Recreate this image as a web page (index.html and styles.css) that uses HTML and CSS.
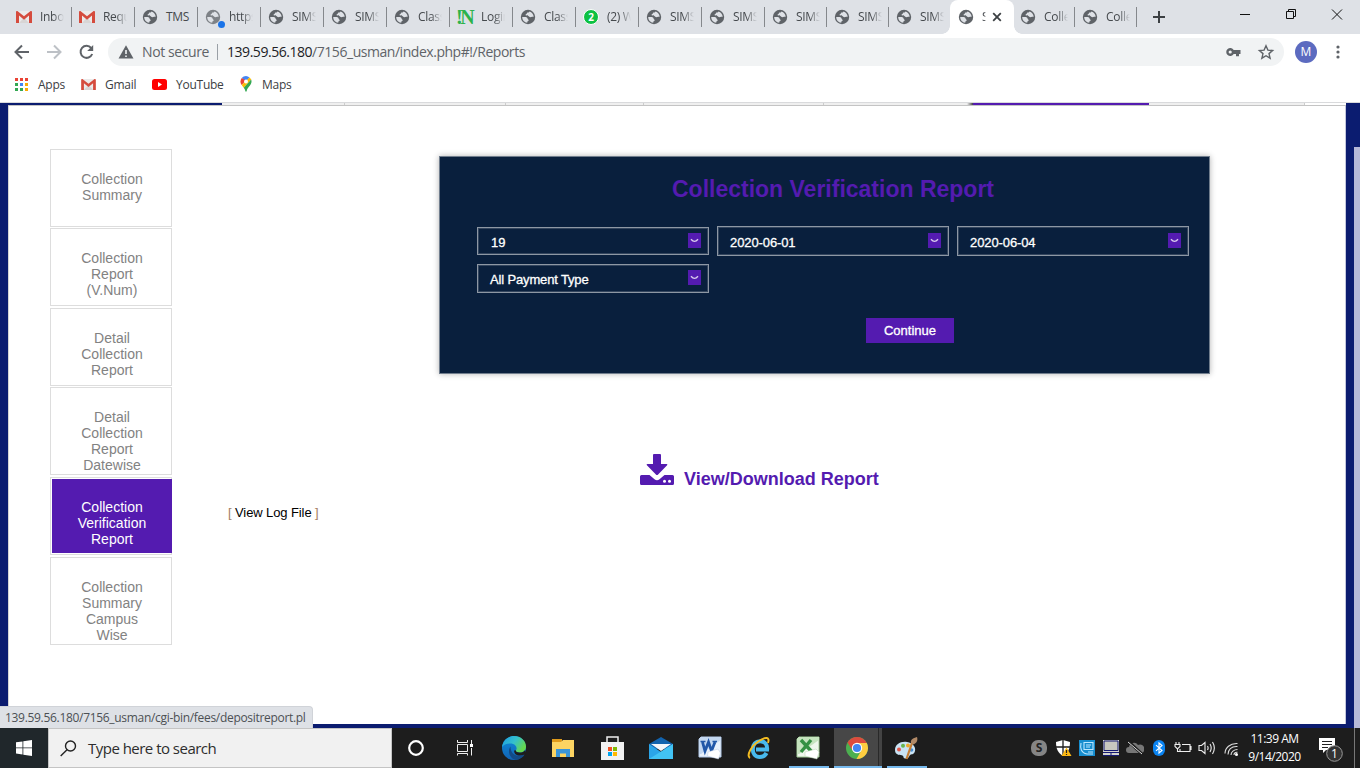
FILE: index.html
```html
<!DOCTYPE html>
<html lang="en">
<head>
<meta charset="utf-8">
<title>Reports</title>
<link rel="stylesheet" href="styles.css">
</head>
<body>
<svg class="defs" width="0" height="0">
  <symbol id="globe" viewBox="0 0 16 16"><circle cx="8" cy="8" r="7.2" fill="#5f6368"/><path d="M2.200 8c1.800 0 3.800-.2 4.800.6.800.7.300 1.600 1.200 1.900 1 .4.300 1.500-.4 1.700-.6.200-.5.900-.5 1.500C4.300 13.500 2.200 11 2.200 8zM9.500 2.400c-.4 1.100-1.200 1-2 1.200-.8.300-.4 1.300-1.200 1.500-.6.200-.9.600-.6 1.200.5.800 2.300.2 3 .9.700.8 1.700 1.200 2.600.9.800-.3 1.400-.5 2.400-.3-.2-2.600-1.800-4.700-4.200-5.400z" fill="#dee1e6"/></symbol>
  <symbol id="gmail" viewBox="0 0 16 12"><path d="M1 0h14v12H1z" fill="#eceaea"/><path d="M3 12 8 6.500 13 12z" fill="#d8d5d5"/><path d="M0 1v11h3V4.600L8 8.700l5-4.100V12h3V1c0-.8-1-1.300-1.700-.8L8 5.300 1.700.2C1-.3 0 .2 0 1z" fill="#d54b3d"/></symbol>
  <symbol id="chev" viewBox="0 0 13 15"><path d="M0 0h13v15H0z" fill="#541bb0"/><path d="M3 6.200q1.800 2.200 3.500 2.200T10 6.200" fill="none" stroke="#d9ccec" stroke-width="1.400"/></symbol>
</svg>

<header class="browser">
  <div class="tabs">
    <div class="tab"><svg class="fav mail"><use href="#gmail"/></svg><span>Inbox</span></div>
    <div class="tab"><svg class="fav mail"><use href="#gmail"/></svg><span>Reque</span></div>
    <div class="tab"><svg class="fav"><use href="#globe"/></svg><span class="full">TMS</span></div>
    <div class="tab loading"><svg class="fav"><use href="#globe"/></svg><i class="dot"></i><span>https</span></div>
    <div class="tab"><svg class="fav"><use href="#globe"/></svg><span>SIMS</span></div>
    <div class="tab"><svg class="fav"><use href="#globe"/></svg><span>SIMS</span></div>
    <div class="tab"><svg class="fav"><use href="#globe"/></svg><span>Class</span></div>
    <div class="tab"><b class="notes">!N</b><span>Login</span></div>
    <div class="tab"><svg class="fav"><use href="#globe"/></svg><span>Class</span></div>
    <div class="tab"><b class="chat">2</b><span>(2) W</span></div>
    <div class="tab"><svg class="fav"><use href="#globe"/></svg><span>SIMS</span></div>
    <div class="tab"><svg class="fav"><use href="#globe"/></svg><span>SIMS</span></div>
    <div class="tab narrow"><svg class="fav"><use href="#globe"/></svg><span>SIMS</span></div>
    <div class="tab narrow"><svg class="fav"><use href="#globe"/></svg><span>SIMS</span></div>
    <div class="tab narrow last"><svg class="fav"><use href="#globe"/></svg><span>SIMS</span></div>
    <div class="tab narrow active"><svg class="fav"><use href="#globe"/></svg><span>SIMS</span><svg class="close" viewBox="0 0 10 10"><path d="M1.200 1.200l7.600 7.600M8.800 1.200L1.200 8.800" stroke="#3c4043" stroke-width="1.800"/></svg></div>
    <div class="tab narrow"><svg class="fav"><use href="#globe"/></svg><span>Collec</span></div>
    <div class="tab narrow"><svg class="fav"><use href="#globe"/></svg><span>Collec</span></div>
    <svg class="plus" viewBox="0 0 12 12"><path d="M6 0v12M0 6h12" stroke="#3c4043" stroke-width="2"/></svg>
    <svg class="winctl" viewBox="0 0 120 20" fill="none" stroke="#111" stroke-width="1"><path d="M10 9.500h10M56.500 6.500h7v7h-7zM58.500 6.500v-2h7v7h-2M102 4.500l10 10M112 4.500l-10 10"/></svg>
  </div>

  <div class="toolbar">
    <svg class="nav" viewBox="0 0 96 20" fill="none" stroke-width="2"><path d="M17 10H4M10 3.500L3.500 10l6.500 6.500" stroke="#5f6368"/><path d="M35 10h13M42 3.500l6.500 6.500-6.500 6.500" stroke="#bdc1c6"/><path d="M79.200 6A6 6 0 1 0 80.200 12" stroke="#5f6368"/><path d="M81.200 3v6h-6z" fill="#5f6368"/></svg>
    <div class="address">
      <svg class="warn" viewBox="0 0 16 14"><path d="M8 .3L15.500 13.500H.5z" fill="#5f6368"/><path d="M8 5v4M8 10.500v1.500" stroke="#f1f3f4" stroke-width="1.600"/></svg>
      <span class="secure">Not secure</span>
      <span class="url"><em>139.59.56.180</em>/7156_usman/index.php#!/Reports</span>
      <svg class="addricons" viewBox="0 0 50 16"><path d="M7.700 6a4 4 0 1 0 0 4H10v2.200h3V10h1.500V6zM4.200 6.400a1.600 1.600 0 1 1 0 3.200 1.600 1.600 0 0 1 0-3.200z" fill="#5f6368" fill-rule="evenodd"/><path d="M40 1.800l1.900 4.300 4.700.4-3.600 3.100 1.100 4.600-4.100-2.500-4.100 2.500 1.100-4.600-3.600-3.100 4.700-.4z" fill="none" stroke="#5f6368" stroke-width="1.400"/></svg>
    </div>
    <b class="avatar">M</b>
    <svg class="dots" viewBox="0 0 4 14" fill="#5f6368"><circle cx="2" cy="2" r="1.600"/><circle cx="2" cy="7" r="1.600"/><circle cx="2" cy="12" r="1.600"/></svg>
  </div>

  <nav class="bookmarks">
    <a class="bm apps"><svg viewBox="0 0 13 13"><path d="M0 0h3v3H0zM5 0h3v3H5zM10 0h3v3h-3z" fill="#ea4335"/><path d="M0 5h3v3H0zM0 10h3v3H0zM5 10h3v3H5z" fill="#34a853"/><path d="M5 5h3v3H5z" fill="#4285f4"/><path d="M10 5h3v3h-3zM10 10h3v3h-3z" fill="#fbab05"/></svg>Apps</a>
    <a class="bm gm"><svg><use href="#gmail"/></svg>Gmail</a>
    <a class="bm yt"><svg viewBox="0 0 15 11"><rect width="15" height="11" rx="2.500" fill="#f00"/><path d="M6 3v5l4-2.500z" fill="#fff"/></svg>YouTube</a>
    <a class="bm mp"><svg viewBox="0 0 12 16"><path d="M6 0a5.600 5.600 0 0 0-4.300 2L6 5.600 9.500 1.400A5.500 5.500 0 0 0 6 0z" fill="#4285f4"/><path d="M1.700 2C-.2 4.500.4 7.200 1.700 9L6 4.500z" fill="#ea4335"/><path d="M9.500 1.400L1.700 9l2 2.700 7.500-8c-.4-1-.9-1.700-1.700-2.300z" fill="#fbbc04"/><path d="M11.200 3.600C12 6 11.300 7.800 9.800 9.700 8.300 11.500 7 12.500 6.700 15c-.2 1-1.200 1-1.400 0-.2-1.400-.8-2.300-1.600-3.300z" fill="#34a853"/><circle cx="6" cy="5.500" r="2" fill="#fff"/></svg>Maps</a>
  </nav>
</header>

<main class="viewport">
  <div class="strip"><i class="s1"></i><i class="s2"></i><i class="s3"></i><i class="s4"></i><i class="s5"></i><i class="s6"></i><i class="s7"></i><i class="s8"></i><i class="s9"></i></div>
  <div class="page">
    <aside class="menu">
      <a class="item">Collection Summary</a>
      <a class="item g1">Collection Report (V.Num)</a>
      <a class="item g2">Detail Collection Report</a>
      <a class="item g1 tall">Detail Collection Report Datewise</a>
      <a class="item g2 on"><span>Collection Verification Report</span></a>
      <a class="item g2 tall">Collection Summary Campus Wise</a>
    </aside>
    <section class="content">
      <form class="panel">
        <h1>Collection Verification Report</h1>
        <div class="fields">
          <div class="select first">19<svg><use href="#chev"/></svg></div>
          <div class="select">2020-06-01<svg><use href="#chev"/></svg></div>
          <div class="select">2020-06-04<svg><use href="#chev"/></svg></div>
          <div class="select pay">All Payment Type<svg><use href="#chev"/></svg></div>
        </div>
        <div class="go">Continue</div>
      </form>
      <a class="download"><svg viewBox="0 0 34 32" fill="#541bb0"><path d="M13 1q0-1 1-1h6q1 0 1 1v9h5.500q1.500 0 .6 1.200l-9 9.300q-1.100 1-2.200 0l-9-9.300Q6 10 7.500 10H13z"/><path d="M1.500 21h8l5 4.300q2.500 2 5 0l5-4.300h8q1.500 0 1.500 1.500v7q0 1.500-1.500 1.500h-31Q0 31 0 29.500v-7Q0 21 1.500 21z"/><circle cx="24.500" cy="27.300" r="1.500" fill="#fff"/><circle cx="29.500" cy="27.300" r="1.500" fill="#fff"/></svg><span>View/Download Report</span></a>
      <div class="log">[ <a>View Log File</a> ]</div>
    </section>
  </div>
  <i class="scroll"></i>
  <div class="status"><span>139.59.56.180/7156_usman/cgi-bin/fees/depositreport.pl</span></div>
</main>

<footer class="taskbar">
  <div class="start"><svg viewBox="0 0 16 16" fill="#fff"><path d="M0 2.300l6.500-.9v6.100H0zM7.300 1.300L16 0v7.500H7.300zM0 8.300h6.500v6.200L0 13.600zM7.300 8.300H16V16l-8.700-1.300z"/></svg></div>
  <div class="search"><svg viewBox="0 0 17 17" fill="none" stroke="#222" stroke-width="1.400"><circle cx="10.500" cy="6" r="5"/><path d="M7 9.700L.7 16"/></svg><span>Type here to search</span></div>
  <div class="apps-row">
    <div class="app"><svg viewBox="0 0 24 24"><circle cx="12" cy="12" r="6.800" fill="none" stroke="#fff" stroke-width="2.200"/></svg></div>
    <div class="app"><svg viewBox="0 0 24 24" fill="none" stroke="#eee" stroke-width="1"><path d="M4.500 4v2.500h10V4M4.500 8.500h10v7h-10zM4.500 19.500v-2h10v2M18.500 4v5M18.500 12v7.500"/><path d="M17 8h3v3h-3z" fill="#fff" stroke="none"/></svg></div>
    <div class="app"><svg viewBox="0 0 24 24"><defs><linearGradient id="e1" x2="1" y2=".5"><stop stop-color="#1a9be5"/><stop offset=".55" stop-color="#35c1cc"/><stop offset="1" stop-color="#65d84e"/></linearGradient><linearGradient id="e2" x2="0" y2="1"><stop stop-color="#0d8ddd"/><stop offset="1" stop-color="#1262b2"/></linearGradient></defs><circle cx="12" cy="12" r="12" fill="url(#e2)"/><path d="M0 11C1 4.500 6 0 12 0c7 0 12 5 12 10.500 0 4-3 6-6.500 6-2.500 0-4.200-1-3.500-2.200 2-3-1-6.800-5.500-6.800C4.500 7.500 1.200 9 0 11z" fill="url(#e1)"/><path d="M8.500 10.500C4.500 16 9 23.500 14 23.800c4-.4 7-2.600 8.700-5.400-7 3.400-14.200.6-14.200-7.900z" fill="#134a86"/><path d="M13.900 14.300c-.7 1.200 1 2.200 3.600 2.200 2.500 0 4.500-.8 5.600-2.600l.9 3-1.300 1.500c-5.700 2.600-11 .500-10.500-3.900z" fill="#1d1d1d"/></svg></div>
    <div class="app"><svg viewBox="0 0 24 24"><path d="M1 3h10v4H1z" fill="#e09b1b"/><path d="M1 6h9l2-2h11v17H1z" fill="#fcd462"/><path d="M5 21v-8h14v8h-4v-3.500H9V21z" fill="#3a95d8"/></svg></div>
    <div class="app"><svg viewBox="0 0 24 24"><path d="M7 7V1h11v6" fill="none" stroke="#eee" stroke-width="1.500"/><path d="M1 6h23v18H1z" fill="#f2f2f2"/><path d="M8 11h4v4H8z" fill="#f25022"/><path d="M13 11h4v4h-4z" fill="#7fba00"/><path d="M8 16h4v4H8z" fill="#00a4ef"/><path d="M13 16h4v4h-4z" fill="#ffb900"/></svg></div>
    <div class="app"><svg viewBox="0 0 24 24"><path d="M0 8l12-7 12 7v5H0z" fill="#1263ae"/><path d="M0 8l12 8 12-8v15H0z" fill="#2ba5e8"/><path d="M0 23l24-15v15z" fill="#42c3f4"/><path d="M2 8h20l-10 7z" fill="#f3f6fa"/></svg></div>
    <div class="app"><svg viewBox="0 0 24 24"><path d="M3 1h20v20H1V3z" fill="#e9f1fb" stroke="#b2c9e9"/><path d="M1 3l2-2h20v3L3 18H1z" fill="#c4d8f1"/><path d="M4.500 6l2.500 9 3.500-9 3 9L17 6" fill="none" stroke="#2157a8" stroke-width="2.800"/><path d="M2.500 5.500h5M14.500 5.500h4.500" stroke="#2157a8" stroke-width="1.600"/><path d="M10 16l10-3 2.500 4-2 6-11-3z" fill="#fff" stroke="#bccce3" stroke-width=".5"/></svg></div>
    <div class="app"><svg viewBox="0 0 24 24"><path d="M19.500 17c-1.500 3-4 4-6.700 4-4.700 0-7-3.600-7-7.800 0-4.700 3-8 7.300-8 4.800 0 7.400 3.300 7 8.300H9" fill="none" stroke="#48b9ed" stroke-width="4"/><path d="M3 22C-1 20 4 10 12 5c7-4.500 11-4 9 2" fill="none" stroke="#f4bc21" stroke-width="2"/></svg></div>
    <div class="app open"><svg viewBox="0 0 24 24"><path d="M3 1h20v20H1V3z" fill="#eef6ec" stroke="#9fca94"/><path d="M1 3l2-2h20v3L3 18H1z" fill="#c5e3be"/><path d="M5 4l11 12M15 4L5 16" stroke="#349142" stroke-width="3.400"/><path d="M9 16l11-3 3 3-2 7-12-3z" fill="#fff" stroke="#b9d2b2" stroke-width=".5"/></svg></div>
    <div class="app current"><svg viewBox="0 0 24 24"><circle cx="12" cy="12" r="11" fill="#4caf50"/><path d="M12 12L2.500 6.500A11 11 0 0 1 21.500 6.500z" fill="#dd4b3e"/><path d="M12 7h9.800A11 11 0 0 1 11.500 23l4.800-8.500z" fill="#ffcd40"/><path d="M2.500 6.500l5 8L12 7h9.800l-.3-.5z" fill="#dd4b3e"/><circle cx="12" cy="12" r="5.200" fill="#fff"/><circle cx="12" cy="12" r="4.100" fill="#4285f4"/></svg></div>
    <div class="app open"><svg viewBox="0 0 24 24"><path d="M1 14C1 8 7 5 13 6s9 5 8 9-4 3-5 4-1 4-5 3.500c-2-.3-1-2-2.500-3S1 20 1 14z" fill="#c9e3f4"/><circle cx="5" cy="13.500" r="2" fill="#e1574a"/><circle cx="9" cy="9.700" r="2" fill="#66b64e"/><circle cx="14" cy="9.500" r="2" fill="#efa929"/><circle cx="17.500" cy="14" r="1.800" fill="#488ed2"/><path d="M12.500 23L18 7" stroke="#c67f36" stroke-width="2.200"/><path d="M17 7c-1-3 2-5 6-6 1 3 0 6-3.500 7.500z" fill="#b28a67"/></svg></div>
  </div>
  <div class="tray">
    <svg viewBox="0 0 18 18"><rect x="1" y="1" width="16" height="16" rx="7" fill="#858585"/><text x="9" y="13.300" text-anchor="middle" class="sk">S</text></svg>
    <svg viewBox="0 0 18 18"><path d="M9 1l7 2c0 7-2 11-7 14C4 14 2 10 2 3z" fill="#fff"/><path d="M9 1v15M2 8h14" stroke="#1d1d1d" stroke-width="1.300"/><path d="M12.500 8.500L17.500 17h-10z" fill="#fdb913"/><path d="M12.500 11v3M12.500 15v1" stroke="#222" stroke-width="1.200"/></svg>
    <svg viewBox="0 0 18 18"><path d="M1 1h16v16H1z" fill="#178dce"/><path d="M3 4c-1 5 0 10 6 11h6M6 3.500h9v7H6zM8 6h5M8 8h4M10 13h5" fill="none" stroke="#bde8ff" stroke-width="1.100"/></svg>
    <svg viewBox="0 0 18 18"><path d="M1 1h16v16H1z" fill="#d3d3cd"/><path d="M2 2h14v9.500H2z" fill="#c8c7c0" stroke="#151973" stroke-width="1"/><path d="M1 13.500h16M9 13v4M1 16.500h16" stroke="#151973"/></svg>
    <svg viewBox="0 0 18 18"><path d="M3 14a3 3 0 0 1 0-6 5 5 0 0 1 9-2 4 4 0 0 1 4 8z" fill="#777"/><path d="M2 2l14 13" stroke="#1d1d1d" stroke-width="3"/><path d="M2 3l14 12" stroke="#ddd" stroke-width="1"/></svg>
    <svg viewBox="0 0 18 18"><rect x="3" y="1" width="12" height="16" rx="6" fill="#0a84f2"/><path d="M6 6.200l6 5.300-3 2.500V4l3 2.500-6 5.300" fill="none" stroke="#fff" stroke-width="1.100"/></svg>
    <svg viewBox="0 0 18 18" fill="none" stroke="#eee" stroke-width="1.100"><path d="M8 5.500h8v7H6V10M16 7.500h1v3h-1M2 3v2M5 3v2M1 5.500h5v2l-2 2H3l-2-2zM3.500 9.500v3H6"/></svg>
    <svg viewBox="0 0 18 18" fill="none" stroke="#eee" stroke-width="1.100"><path d="M1 6.500h2.500L7 3.500v11l-3.500-3H1zM9.500 7q1.200 2 0 4M12 5q2.400 4 0 8M14.500 3q3.700 6 0 12"/></svg>
    <svg viewBox="0 0 18 18" fill="none" stroke="#ddd" stroke-width="1.100"><path d="M3 14.500C3 9 8 4 15.500 4.500M6 15.500C6 11 9 7 15.500 7.500M9 16c0-3 3-5.500 6.500-5.500M12 16c0-1.500 1-3 3.500-2.700"/><circle cx="14.500" cy="15.500" r="1.500" fill="#fff" stroke="none"/></svg>
  </div>
  <div class="clock"><span>11:39 AM</span><span>9/14/2020</span></div>
  <div class="notify"><svg viewBox="0 0 26 26"><path d="M1 1h16v12h-9l-3 3v-3H1z" fill="#fff"/><path d="M4 4.500h10M4 7.500h10M4 10.500h6" stroke="#222" stroke-width="1"/><circle cx="16.500" cy="16.500" r="7.800" fill="#333" stroke="#999"/><text x="16.500" y="20.700" text-anchor="middle" class="badge">1</text></svg></div>
</footer>
</body>
</html>
```
FILE: styles.css
```css
* { box-sizing: border-box; }
body { margin: 0; width: 1360px; height: 768px; overflow: hidden; display: flex; flex-direction: column; background: #fff; font-family: "Liberation Sans", Arial, sans-serif; }
.defs { display: none; }
svg { display: block; flex: none; }

.browser, .status, .taskbar { font-family: "Open Sans", "Noto Sans", sans-serif; }
.browser { height: 103px; border-bottom: 1px solid #d9dadc; flex: none; }
.tabs { height: 34px; background: #dee1e6; display: flex; align-items: center; padding-left: 9px; }
.tab { position: relative; width: 63px; height: 20px; border-right: 1px solid #85888c; display: flex; align-items: center; padding-left: 7px; flex: none; }
.tab span { margin-left: 8px; width: 24px; overflow: hidden; white-space: nowrap; font-size: 12px; line-height: 18px; letter-spacing: -.3px; color: #45494d; -webkit-mask-image: linear-gradient(90deg, #000 55%, transparent); mask-image: linear-gradient(90deg, #000 55%, transparent); }
.tab .full { overflow: visible; -webkit-mask-image: none; mask-image: none; }
.narrow { width: 62px; }
.fav { width: 16px; height: 16px; }
.fav.mail { height: 12px; }
.last { border-right-color: transparent; }
.loading .fav { opacity: .75; }
.dot { position: absolute; left: 20px; top: 14px; width: 7px; height: 7px; border-radius: 50%; background: #1a73e8; }
.notes { width: 18px; margin: 0 -1px 0 -1px; font: bold 20px/20px "Liberation Serif", serif; letter-spacing: -2.500px; color: #2db34a; }
.chat { width: 16px; height: 16px; border-radius: 50%; border: 1px solid #fff; background: #0dc143; color: #fff; font-size: 10px; line-height: 14px; text-align: center; }
.active { height: 34px; width: 64px; margin: 0 -1px 0 -1px; padding-left: 8px; background: #fff; border: 0; border-radius: 8px 8px 0 0; }
.active::before, .active::after { content: ""; position: absolute; bottom: 0; width: 8px; height: 8px; }
.active::before { left: -8px; background: radial-gradient(circle at 0 0, #dee1e6 7.500px, #fff 8px); }
.active::after { right: -8px; background: radial-gradient(circle at 100% 0, #dee1e6 7.500px, #fff 8px); }
.active span { width: 4px; }
.close { width: 10px; height: 10px; margin-left: 6px; }
.plus { width: 12px; height: 12px; margin-left: 16px; }
.winctl { width: 120px; height: 20px; margin: -5px 0 0 65px; }

.toolbar { height: 35px; display: flex; align-items: center; padding: 0 0 0 12px; }
.nav { width: 96px; height: 20px; }
.address { width: 1176px; height: 28px; border-radius: 14px; background: #f1f3f4; display: flex; align-items: center; padding-left: 10px; color: #5f6368; font-size: 14px; }
.warn { width: 16px; height: 14px; }
.secure { margin-left: 8px; width: 76px; line-height: 16px; border-right: 1px solid #9aa0a6; letter-spacing: -.4px; white-space: nowrap; }
.url { margin-left: 9px; white-space: nowrap; letter-spacing: -.46px; }
.url em { font-style: normal; color: #202124; }
.addricons { width: 50px; height: 16px; margin-left: auto; margin-right: 8px; }
.avatar { margin-left: 11px; width: 22px; height: 22px; border-radius: 50%; background: #5c6bc0; color: #fff; font-weight: 400; font-size: 12px; line-height: 22px; text-align: center; }
.dots { width: 4px; height: 14px; margin-left: 19px; }
.bookmarks { height: 30px; display: flex; align-items: center; padding-left: 15px; font-size: 12px; color: #3c4043; letter-spacing: -.25px; }
.bm { display: flex; align-items: center; }
.apps { width: 66px; } .gm { width: 71px; } .yt { width: 88px; }
.apps svg { width: 13px; height: 13px; margin-right: 10px; }
.gm svg { width: 15px; height: 11px; margin-right: 9px; }
.yt svg { width: 15px; height: 11px; margin-right: 9px; }
.mp svg { width: 12px; height: 16px; margin-right: 10px; }

.viewport { position: relative; height: 625px; background: #0b1c70; padding: 0 14px 4px 8px; display: flex; flex-direction: column; flex: none; }
.strip { height: 3px; display: flex; border-bottom: 1px solid #c4c4c4; }
.strip i { background: #efefef; border-right: 1px solid #ccc; }
.strip .s1 { width: 214px; background: #0b1c70; border: 0; }
.s2 { width: 123px; } .s3 { width: 161px; } .s4 { width: 138px; } .s5 { width: 180px; }
.strip .s6 { width: 149px; border: 0; background: linear-gradient(90deg, #efefef 143px, #444); }
.strip .s7 { width: 176px; background: #541bb0; border: 0; }
.s8 { width: 156px; }
.strip .s9 { flex: 1; background: #fff; border: 0; }
.page { flex: 1; background: #fff; border-right: 1px solid #c4c7dc; border-left: 1px solid #d5d5d5; display: flex; padding: 43px 0 0 41px; }
.menu { width: 122px; flex: none; }
.item { display: block; height: 78px; border: 1px solid #ddd; padding: 21px 23px 0 25px; font-size: 14px; line-height: 16px; text-align: center; color: #828282; }
.tall { height: 88px; }
.g1 { margin-top: 1px; } .g2 { margin-top: 2px; }
.menu .on { padding: 1px 0 1px 1px; color: #fff; }
.on span { display: block; width: 120px; height: 74px; padding: 20px 22px 0; background: #541bb0; }
.content { width: 1160px; display: flex; flex-direction: column; align-items: flex-start; }
.panel { margin: 7px 0 0 267px; width: 771px; height: 218px; background: #091f3d; border: 1px solid #707d8d; box-shadow: 0 0 6px rgba(0,0,0,.3); padding: 18px 0 0 37px; }
h1 { margin: 0 0 0 16px; width: 680px; text-align: center; font-size: 23px; line-height: 28px; color: #541bb0; }
.fields { margin-top: 23px; display: grid; grid-template-columns: repeat(3, 232px); column-gap: 8px; row-gap: 8px; }
.select { height: 30px; border: 1px solid #8d97a4; box-shadow: inset 0 0 0 1px #33455e; display: flex; align-items: center; justify-content: space-between; padding: 2px 7px 0 12px; color: #fff; font-size: 13px; letter-spacing: -.1px; -webkit-text-stroke: .3px #fff; }
.select svg { width: 13px; height: 15px; margin-top: -4px; }
.first { height: 28px; margin-top: 1px; padding-left: 13px; }
.pay { height: 29px; letter-spacing: -.15px; }
.go { margin: 25px 0 0 389px; width: 88px; height: 25px; background: #541bb0; color: #fff; font-size: 13px; line-height: 25px; text-align: center; -webkit-text-stroke: .3px #fff; }
.download { margin: 80px 0 0 468px; display: flex; align-items: flex-end; gap: 10px; color: #541bb0; font-weight: 700; font-size: 18px; line-height: 16px; }
.download svg { width: 34px; height: 32px; }
.download span { margin-bottom: -1px; }
.log { margin: 19px 0 0 56px; font-size: 13px; letter-spacing: -.1px; line-height: 16px; color: #a47e62; }
.log a { color: #000; }
.scroll { position: absolute; right: 0; top: 44px; bottom: 0; width: 6px; background: #b6b9d8; }
.status { position: absolute; left: 0; bottom: 0; width: 313px; height: 22px; background: #dee1e6; border: 1px solid #d0d3d8; border-width: 1px 1px 0 0; border-radius: 0 4px 0 0; padding-left: 5px; font-size: 12px; line-height: 22px; color: #4c5054; letter-spacing: -.31px; white-space: nowrap; }

.taskbar { height: 40px; flex: none; background: #1d1d1d; display: flex; align-items: center; color: #fff; }
.start { width: 48px; height: 40px; background: #20272b; display: flex; align-items: center; padding-left: 16px; }
.start svg { width: 16px; height: 16px; }
.search { width: 344px; height: 40px; background: #f1f1f1; border: 1px solid #c4c4c4; display: flex; align-items: center; padding-left: 11px; color: #2d2d2d; font-size: 15px; letter-spacing: -.52px; }
.search svg { width: 17px; height: 17px; margin-right: 11px; }
.apps-row { display: flex; width: 635px; }
.app { width: 49px; height: 40px; display: flex; align-items: center; justify-content: center; padding-right: 1px; }
.app svg { width: 24px; height: 24px; }
.open { background: linear-gradient(#76b9ed, #76b9ed) 50% 100% / 40px 2px no-repeat; }
.current { background: linear-gradient(#76b9ed, #76b9ed) 1px 100% / 48px 2px no-repeat, linear-gradient(90deg, transparent 1px, #474747 1px 45px, #292929 45px 46px, #434343 46px); }
.tray { display: flex; width: 219px; }
.tray svg { width: 18px; height: 18px; margin: 0 3px; }
.sk { font: bold 12px "Open Sans", sans-serif; fill: #222; }
.clock { width: 57px; display: flex; flex-direction: column; align-items: center; font-size: 12px; line-height: 18px; letter-spacing: -.5px; white-space: nowrap; }
.notify { margin-left: 15px; padding: 4px 10px 0 0; height: 40px; display: flex; align-items: center; border-right: 1px solid #777; }
.notify svg { width: 26px; height: 26px; }
.badge { font: 12px "Open Sans", sans-serif; fill: #fff; }
```
